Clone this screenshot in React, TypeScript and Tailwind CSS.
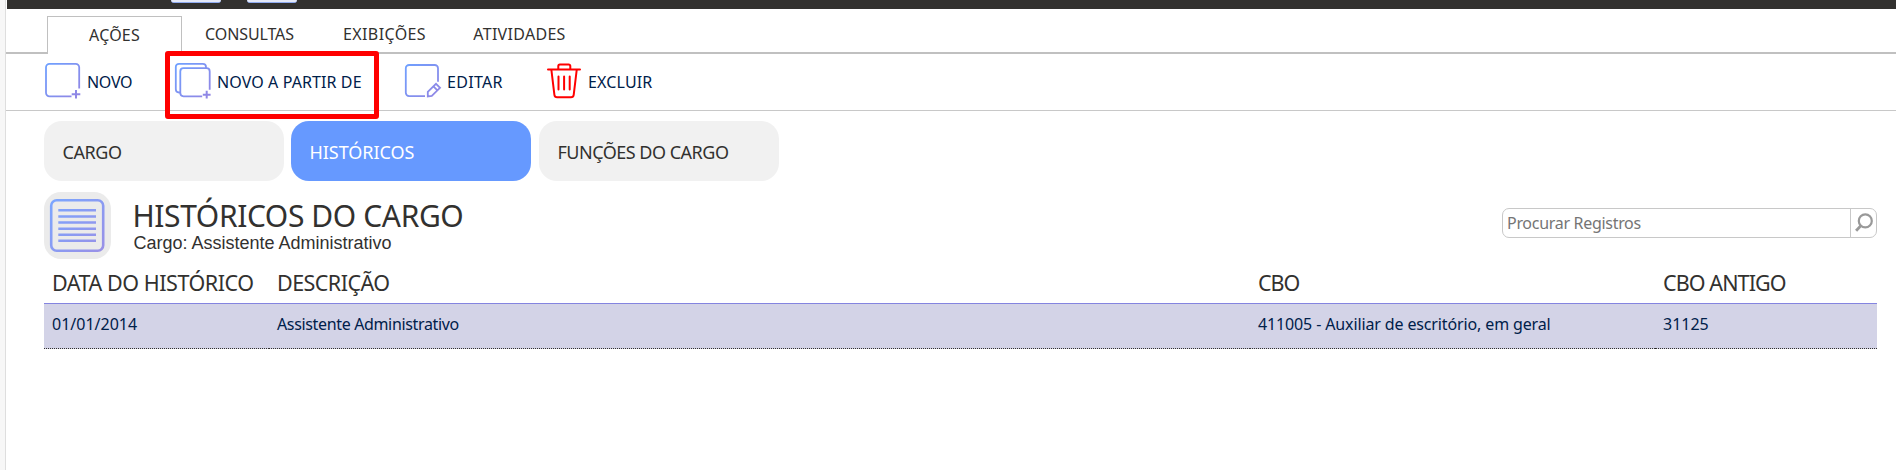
import type { ReactNode } from "react";

const tabs = [
  { label: "AÇÕES", spacing: "tracking-[0.2px]", active: true },
  { label: "CONSULTAS", spacing: "tracking-[-0.1px]" },
  { label: "EXIBIÇÕES", spacing: "tracking-[0.4px]" },
  { label: "ATIVIDADES", spacing: "tracking-[0.3px]" },
];

const sections = [
  { label: "CARGO", spacing: "tracking-[-0.4px]" },
  { label: "HISTÓRICOS", spacing: "ml-[7px] mr-2 tracking-[-0.05px]", active: true },
  { label: "FUNÇÕES DO CARGO", spacing: "tracking-[-0.5px]" },
];

const columns = [
  { title: "DATA DO HISTÓRICO", value: "01/01/2014", head: "tracking-[-0.45px]", cell: "" },
  { title: "DESCRIÇÃO", value: "Assistente Administrativo", head: "tracking-[-0.55px]", cell: "tracking-[-0.35px]" },
  { title: "CBO", value: "411005 - Auxiliar de escritório, em geral", head: "tracking-[-1px]", cell: "tracking-[-0.13px]" },
  { title: "CBO ANTIGO", value: "31125", head: "tracking-[-0.9px]", cell: "" },
];

const grid = "grid grid-cols-[225px_981px_405px_222px]";

function Icon({ stroke, children }: { stroke: string; children: ReactNode }) {
  return (
    <svg width="45" height="45" viewBox="0 0 45 45" fill="none" stroke={stroke} strokeWidth="1.8" className="shrink-0">
      {children}
    </svg>
  );
}

function NewIcon() {
  return (
    <Icon stroke="url(#blue)">
      <path d="M39.2 30.5V9.3a3.5 3.5 0 0 0-3.5-3.5H9.5A3.5 3.5 0 0 0 6 9.3v25.5a3.5 3.5 0 0 0 3.5 3.5h22" />
      <path d="M36 32v8.6M31.7 36.3h8.6" strokeWidth="2" />
    </Icon>
  );
}

function CopyIcon() {
  return (
    <Icon stroke="url(#blue)">
      <path d="M36 10V9a3.2 3.2 0 0 0-3.2-3.2H9A3.2 3.2 0 0 0 5.8 9v22.3a3.2 3.2 0 0 0 3.2 3.2h1" />
      <path d="M39.7 31.8V13.4a3.2 3.2 0 0 0-3.2-3.2h-23a3.2 3.2 0 0 0-3.2 3.2v21.7a3.2 3.2 0 0 0 3.2 3.2h18.7" />
      <path d="M36.7 32.8v7.8M32.8 36.7h7.8" strokeWidth="2" />
    </Icon>
  );
}

function EditIcon() {
  return (
    <Icon stroke="url(#blue)">
      <path d="M38 23.7V10.3A3.3 3.3 0 0 0 34.7 7H9.1a3.3 3.3 0 0 0-3.3 3.3v24.5a3.3 3.3 0 0 0 3.3 3.3H25" />
      <path d="M27.8 38.4v-4.6l8.2-8 4 4-8.2 8.2zM33.4 28.3l4 4" />
    </Icon>
  );
}

function TrashIcon() {
  return (
    <Icon stroke="#ff0000">
      <g strokeWidth="2" strokeLinecap="round" strokeLinejoin="round">
        <path d="M6 11.4h32M16.3 11V8a1.6 1.6 0 0 1 1.6-1.6h8.8A1.6 1.6 0 0 1 28.3 8v3" />
        <path d="m9.4 12 3 24.8a2.8 2.8 0 0 0 2.8 2.4h13.7a2.8 2.8 0 0 0 2.8-2.4l3-24.8" />
        <path d="M16.5 18.5v13M22.1 18.5v13M27.7 18.5v13" />
      </g>
    </Icon>
  );
}

const actions = [
  { label: "NOVO", icon: <NewIcon />, width: "w-[130px] gap-0.5", spacing: "tracking-[-0.3px]" },
  { label: "NOVO A PARTIR DE", icon: <CopyIcon />, width: "w-[230px] gap-0.5", spacing: "tracking-[0.1px]" },
  { label: "EDITAR", icon: <EditIcon />, width: "w-[142px] gap-0.5", spacing: "tracking-[0.3px]" },
  { label: "EXCLUIR", icon: <TrashIcon />, width: "w-[130px] gap-px", spacing: "tracking-[0.15px]" },
];

export default function App() {
  return (
    <div className="relative flex h-[470px] w-[1896px] overflow-hidden bg-white font-['Noto_Sans',sans-serif] text-base whitespace-nowrap text-[#32312f]">
      <svg width="0" height="0" className="absolute">
        <linearGradient id="blue" gradientUnits="userSpaceOnUse" x1="6" y1="6" x2="38" y2="38">
          <stop offset="0" stopColor="#6fa0ff" />
          <stop offset="1" stopColor="#9186e4" />
        </linearGradient>
      </svg>

      <div className="w-1.5 shrink-0 border-r border-[#dedede] bg-[#f7f7f7]" />

      <div className="min-w-0 flex-1">
        <div className="ml-px flex h-[9px] gap-[26px] bg-[#32312f] pl-[164px]">
          <div className="h-[2.5px] w-[50px] rounded-b-[5px] border-b border-[#8fabf0] bg-[#e4e9f7]" />
          <div className="h-[2.5px] w-[50px] rounded-b-[5px] border-b border-[#8fabf0] bg-[#e4e9f7]" />
        </div>

        <div className="flex h-[45px] border-b-2 border-[#c0c0c0] pt-[7px] pl-[41px]">
          {tabs.map((t) => (
            <div
              key={t.label}
              className={`w-[135px] text-center leading-[36px] ${t.spacing} ${
                t.active ? "-mb-0.5 h-[38px] border border-b-0 border-[#c0c0c0] bg-white" : "h-9"
              }`}
            >
              {t.label}
            </div>
          ))}
        </div>

        <div className="flex h-[57px] border-b border-[#c8c8c8] pt-1 pl-[34px] text-[#00204a]">
          {actions.map((a) => (
            <div key={a.label} className={`flex items-start ${a.width}`}>
              {a.icon}
              <span className={`leading-[48px] ${a.spacing}`}>{a.label}</span>
            </div>
          ))}
        </div>

        <div className="mt-[10px] ml-[38px] flex text-[18px]">
          {sections.map((s) => (
            <div
              key={s.label}
              className={`h-[60px] w-[240px] rounded-[18px] pt-px pl-[18.5px] leading-[60px] ${s.spacing} ${
                s.active ? "bg-[#6699ff] text-white" : "bg-[#f1f1f1]"
              }`}
            >
              {s.label}
            </div>
          ))}
        </div>

        <div className="mt-[11px] mr-[19px] ml-[38px] flex h-[67px]">
          <div className="size-[67px] shrink-0 rounded-[17px] bg-[#ebebeb]">
            <svg width="67" height="67" viewBox="0 0 67 67" fill="none">
              <linearGradient id="frame" gradientUnits="userSpaceOnUse" x1="7" y1="7" x2="60" y2="60">
                <stop offset="0" stopColor="#7aa6ff" />
                <stop offset="1" stopColor="#9a90e6" />
              </linearGradient>
              <rect x="7.2" y="8.2" width="52" height="50.6" rx="5.5" stroke="url(#frame)" strokeWidth="2.6" />
              <path
                d="M14.3 18.2H52M14.3 24.5H52M14.3 30.5H52M14.3 36.7H52M14.3 42.7H52M14.3 48.8H52"
                stroke="url(#frame)"
                strokeWidth="2.6"
              />
            </svg>
          </div>
          <div className="flex-1 pt-[6px] pl-[21.5px]">
            <h1 className="text-[30px] leading-9 tracking-[-0.4px]">HISTÓRICOS DO CARGO</h1>
            <p className="-mt-px pl-px font-['Liberation_Sans',sans-serif] text-[18px] leading-5">Cargo: Assistente Administrativo</p>
          </div>
          <div className="mt-4 flex h-[30px] w-[375px] rounded-[7px] border border-[#c8c8c8]">
            <span className="flex-1 pl-1 leading-7 tracking-[-0.3px] text-[#757575]">Procurar Registros</span>
            <div className="w-[26px] border-l border-[#c8c8c8]">
              <svg width="25" height="28" viewBox="0 0 25 28" fill="none" stroke="#999">
                <circle cx="14.3" cy="11.9" r="6.5" strokeWidth="2.2" />
                <path d="m9.8 16.7-4.7 5" strokeWidth="2.8" />
              </svg>
            </div>
          </div>
        </div>

        <div className="mt-1 mr-[19px] ml-[38px]">
          <div className={`${grid} h-[41px] border-b border-[#8484e0] text-[21.5px] leading-10`}>
            {columns.map((c) => (
              <div key={c.title} className={`pl-2 ${c.head}`}>{c.title}</div>
            ))}
          </div>
          <div className={`${grid} h-[45px] bg-[#d3d3e7] leading-10 text-[#00204a]`}>
            {columns.map((c) => (
              <div key={c.title} className={`border-b border-dotted border-[#32312f] pl-2 ${c.cell}`}>{c.value}</div>
            ))}
          </div>
        </div>
      </div>

      <div className="absolute top-[51px] left-[165px] h-[68px] w-[214px] rounded-[3px] border-5 border-[#ff0000]" />
    </div>
  );
}
